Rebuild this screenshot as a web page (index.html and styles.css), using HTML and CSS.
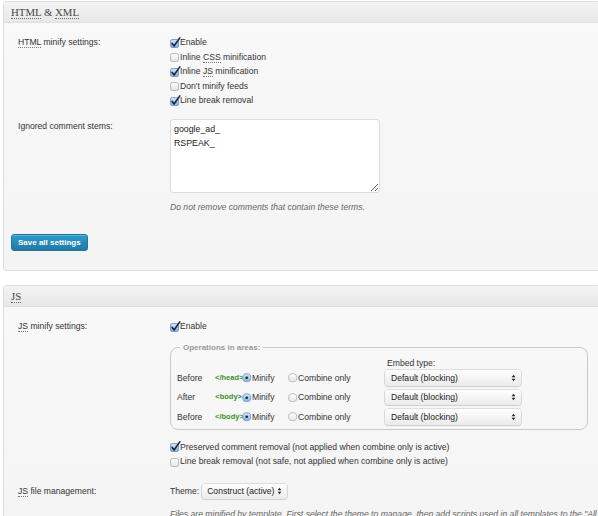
FILE: index.html
```html
<!DOCTYPE html>
<html>
<head>
<meta charset="utf-8">
<link rel="stylesheet" href="styles.css">
</head>
<body>
<svg class="defs" aria-hidden="true">
  <defs>
    <linearGradient id="gOn" x1="0" y1="0" x2="0" y2="1">
      <stop offset="0" stop-color="#d3e6f8"/>
      <stop offset="1" stop-color="#7fb1e2"/>
    </linearGradient>
    <linearGradient id="gOff" x1="0" y1="0" x2="0" y2="1">
      <stop offset="0" stop-color="#ffffff"/>
      <stop offset="1" stop-color="#e4e4e4"/>
    </linearGradient>
    <symbol id="cbOn" viewBox="0 0 11 11">
      <rect x="0.5" y="2.5" width="8" height="8" rx="1.6" fill="url(#gOn)" stroke="#6f8fb5" stroke-width="0.8"/>
      <path d="M2.1 6.4 L4.1 9 L9.8 0.9" fill="none" stroke="#17263f" stroke-width="1.6" stroke-linecap="round" stroke-linejoin="round"/>
    </symbol>
    <symbol id="cbOff" viewBox="0 0 11 11">
      <rect x="0.5" y="2.5" width="8" height="8" rx="1.8" fill="url(#gOff)" stroke="#a8a8a8" stroke-width="0.8"/>
    </symbol>
    <symbol id="rdOn" viewBox="0 0 10 10">
      <circle cx="5" cy="5" r="4.3" fill="url(#gOn)" stroke="#6f8fb5" stroke-width="0.8"/>
      <circle cx="5" cy="5" r="1.4" fill="#17263f"/>
    </symbol>
    <symbol id="rdOff" viewBox="0 0 10 10">
      <circle cx="5" cy="5" r="4.3" fill="url(#gOff)" stroke="#a8a8a8" stroke-width="0.8"/>
    </symbol>
    <symbol id="arrows" viewBox="0 0 6 10">
      <path d="M3 1 L5.3 4 L0.7 4 Z M3 9 L5.3 6 L0.7 6 Z" fill="#222"/>
    </symbol>
  </defs>
</svg>

<div class="panel">
  <h3 class="panel-head"><abbr>HTML</abbr> &amp; <abbr>XML</abbr></h3>
  <div class="panel-body">
    <div class="row">
      <div class="label"><abbr>HTML</abbr> minify settings:</div>
      <div class="field">
        <label class="check"><svg class="cb"><use href="#cbOn"/></svg><span>Enable</span></label>
        <label class="check"><svg class="cb"><use href="#cbOff"/></svg><span>Inline <abbr>CSS</abbr> minification</span></label>
        <label class="check"><svg class="cb"><use href="#cbOn"/></svg><span>Inline <abbr>JS</abbr> minification</span></label>
        <label class="check"><svg class="cb"><use href="#cbOff"/></svg><span>Don't minify feeds</span></label>
        <label class="check"><svg class="cb"><use href="#cbOn"/></svg><span>Line break removal</span></label>
      </div>
    </div>
    <div class="row row-stems">
      <div class="label">Ignored comment stems:</div>
      <div class="field">
        <textarea class="stems">google_ad_
RSPEAK_</textarea>
        <div class="hint hint-stems">Do not remove comments that contain these terms.</div>
      </div>
    </div>
    <button class="btn">Save all settings</button>
  </div>
</div>

<div class="panel">
  <h3 class="panel-head"><abbr>JS</abbr></h3>
  <div class="panel-body">
    <div class="row">
      <div class="label"><abbr>JS</abbr> minify settings:</div>
      <div class="field">
        <label class="check"><svg class="cb"><use href="#cbOn"/></svg><span>Enable</span></label>
        <fieldset class="ops">
          <legend>Operations in areas:</legend>
          <div class="embed-head">Embed type:</div>
          <div class="op-row">
            <span>Before</span>
            <span class="tag">&lt;/head&gt;</span>
            <label class="radio"><svg class="rd"><use href="#rdOn"/></svg><span>Minify</span></label>
            <label class="radio"><svg class="rd"><use href="#rdOff"/></svg><span>Combine only</span></label>
            <span class="sel"><span>Default (blocking)</span><svg class="arr"><use href="#arrows"/></svg></span>
          </div>
          <div class="op-row">
            <span>After</span>
            <span class="tag">&lt;body&gt;</span>
            <label class="radio"><svg class="rd"><use href="#rdOn"/></svg><span>Minify</span></label>
            <label class="radio"><svg class="rd"><use href="#rdOff"/></svg><span>Combine only</span></label>
            <span class="sel"><span>Default (blocking)</span><svg class="arr"><use href="#arrows"/></svg></span>
          </div>
          <div class="op-row">
            <span>Before</span>
            <span class="tag">&lt;/body&gt;</span>
            <label class="radio"><svg class="rd"><use href="#rdOn"/></svg><span>Minify</span></label>
            <label class="radio"><svg class="rd"><use href="#rdOff"/></svg><span>Combine only</span></label>
            <span class="sel"><span>Default (blocking)</span><svg class="arr"><use href="#arrows"/></svg></span>
          </div>
        </fieldset>
        <div class="after-ops">
          <label class="check"><svg class="cb"><use href="#cbOn"/></svg><span>Preserved comment removal (not applied when combine only is active)</span></label>
          <label class="check"><svg class="cb"><use href="#cbOff"/></svg><span>Line break removal (not safe, not applied when combine only is active)</span></label>
        </div>
      </div>
    </div>
    <div class="row row-files">
      <div class="label"><abbr>JS</abbr> file management:</div>
      <div class="field">
        <div class="theme-row">
          <span>Theme:</span>
          <span class="sel sel-theme"><span>Construct (active)</span><svg class="arr"><use href="#arrows"/></svg></span>
        </div>
        <div class="hint hint-files">Files are minified by template. First select the theme to manage, then add scripts used in all templates to the "All Templates" group.</div>
      </div>
    </div>
  </div>
</div>
</body>
</html>
```

FILE: styles.css
```css
html, body {
  margin: 0;
}

body {
  width: 598px;
  height: 516px;
  overflow: hidden;
  padding-top: 1px;
  box-sizing: border-box;
  background: #fff;
  font-family: "Liberation Sans", Arial, sans-serif;
  font-size: 8.6px;
  line-height: 14.5px;
  color: #333;
}

.defs {
  position: absolute;
  width: 0;
  height: 0;
  overflow: hidden;
}

abbr {
  text-decoration: none;
  border-bottom: 1px dotted #777;
}

.panel {
  margin-left: 3px;
  width: 660px;
  border: 1px solid #dfdfdf;
  border-radius: 3px;
  background: linear-gradient(#f9f9f9, #f4f4f4);
}

.panel + .panel {
  margin-top: 14px;
}

.panel-head {
  margin: 0;
  height: 20px;
  padding-left: 7px;
  border-bottom: 1px solid #dfdfdf;
  background: linear-gradient(#f3f3f3, #e8e8e8);
  font-family: "Liberation Serif", "Times New Roman", serif;
  font-weight: normal;
  font-size: 10.8px;
  line-height: 20px;
  color: #464646;
}

.panel-head abbr {
  border-bottom-color: #666;
}

.panel-body {
  padding: 12px 0 19px 7px;
}

.row {
  display: grid;
  grid-template-columns: 152px auto;
  padding-left: 7px;
}

.label {
  line-height: 14.5px;
}

.field {
  display: flex;
  flex-direction: column;
  align-items: flex-start;
}

.check {
  display: flex;
  align-items: center;
  height: 14.5px;
  white-space: nowrap;
}

.cb {
  width: 11px;
  height: 11px;
  margin-right: -1px;
  flex: none;
  overflow: visible;
}

.row-stems {
  margin-top: 11.5px;
}

.stems {
  box-sizing: border-box;
  width: 210px;
  height: 74px;
  margin: 0;
  padding: 2px 3px;
  border: 1px solid #dcdcdc;
  border-radius: 3px;
  background: #fff;
  font-family: "Liberation Sans", Arial, sans-serif;
  font-size: 8.8px;
  line-height: 14px;
  color: #222;
  resize: both;
  outline: none;
}

.hint {
  font-style: italic;
  color: #666;
  line-height: 14.5px;
  white-space: nowrap;
}

.hint-stems {
  margin-top: 6.5px;
}

.btn {
  display: block;
  margin-top: 20px;
  height: 17px;
  padding: 0 6px;
  border: 1px solid #21759b;
  border-radius: 3px;
  background: linear-gradient(#2e9bd0, #2279a3);
  box-shadow: inset 0 1px 0 rgba(120, 200, 230, 0.6);
  color: #fff;
  font-family: "Liberation Sans", Arial, sans-serif;
  font-weight: bold;
  font-size: 8px;
  line-height: 15px;
  white-space: nowrap;
}

/* JS panel */

.ops {
  box-sizing: border-box;
  width: 418px;
  margin: 7px 0 0;
  padding: 0 6px 4px;
  border: 1px solid #c9c9c9;
  border-radius: 8px;
  min-inline-size: 0;
}

.ops legend {
  margin-left: 3px;
  padding: 0 3px;
  font-size: 8px;
  font-weight: bold;
  line-height: 14.5px;
  color: #9a9a9a;
}

.embed-head {
  height: 15px;
  line-height: 17px;
  padding-left: 210px;
}

.op-row {
  display: grid;
  grid-template-columns: 38px 27px 46px 97px 136px;
  align-items: center;
  height: 15.5px;
  white-space: nowrap;
}

.op-row + .op-row {
  margin-top: 4px;
}

.tag {
  text-align: right;
  font-weight: bold;
  font-size: 7.5px;
  color: #3e8e1e;
}

.radio {
  display: flex;
  align-items: center;
}

.rd {
  width: 9.5px;
  height: 9.5px;
  margin-right: 0.5px;
  flex: none;
}

.sel {
  box-sizing: border-box;
  display: flex;
  align-items: center;
  justify-content: space-between;
  height: 15.5px;
  padding: 0 5px 0 6px;
  border-radius: 3px;
  background: linear-gradient(#fefefe, #ebebeb);
  box-shadow: 0 0 0 0.6px #c6c6c6, 0 1px 1px rgba(0, 0, 0, 0.12);
  color: #222;
  white-space: nowrap;
}

.arr {
  width: 5px;
  height: 8px;
  flex: none;
}

.after-ops {
  margin-top: 10px;
}

.row-files {
  margin-top: 15px;
}

.theme-row {
  display: flex;
  align-items: center;
  gap: 3px;
  height: 15.5px;
}

.sel-theme {
  width: 85px;
  padding-left: 5px;
}

.hint-files {
  margin-top: 7.5px;
}
```
